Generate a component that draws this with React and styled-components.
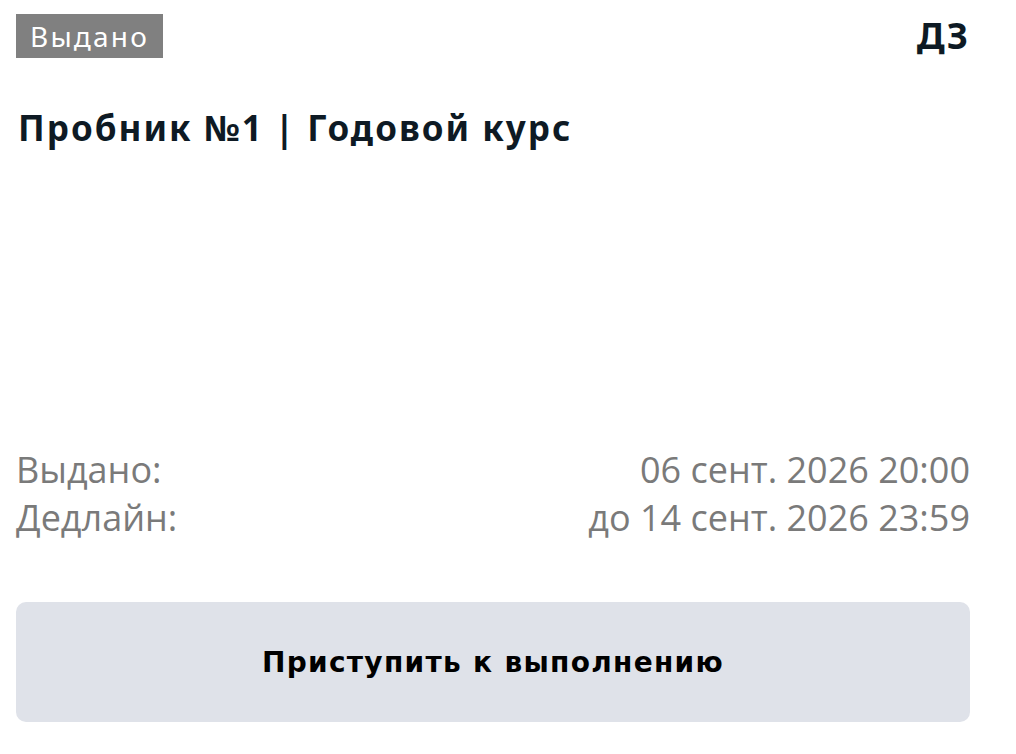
import React from 'react';
import styled, { createGlobalStyle } from 'styled-components';

const GlobalStyle = createGlobalStyle`
  html, body {
    margin: 0;
    padding: 0;
    background: #ffffff;
  }
  body {
    font-family: "Open Sans", "Noto Sans", sans-serif;
  }
`;

function App() {
  return (
    <>
      <GlobalStyle />
      <Card>
        <Header>
          <Badge>Выдано</Badge>
          <Kind>ДЗ</Kind>
        </Header>
        <Title>Пробник №1 | Годовой курс</Title>
        <Info>
          <InfoRow>
            <span>Выдано:</span>
            <span>06 сент. 2026 20:00</span>
          </InfoRow>
          <InfoRow>
            <span>Дедлайн:</span>
            <span>до 14 сент. 2026 23:59</span>
          </InfoRow>
        </Info>
        <StartButton>Приступить к выполнению</StartButton>
      </Card>
    </>
  );
}
export default App;

const Card = styled.div`
  box-sizing: border-box;
  width: 954px;
  height: 722px;
  margin-left: 16px;
  padding-top: 14px;
  display: flex;
  flex-direction: column;
`;

const Header = styled.div`
  display: flex;
  justify-content: space-between;
  align-items: flex-start;
`;

const Badge = styled.div`
  box-sizing: border-box;
  height: 44px;
  padding: 0 14px 0 14px;
  display: flex;
  align-items: center;
  background: #808080;
  color: #ffffff;
  font-family: "Noto Sans", "Open Sans", sans-serif;
  font-size: 28px;
  letter-spacing: 2.2px;
`;

const Kind = styled.div`
  font-family: "Noto Sans", sans-serif;
  font-weight: 700;
  font-size: 36px;
  line-height: 44px;
  letter-spacing: 2px;
  color: #0e1a24;
`;

const Title = styled.h1`
  margin: 46px 0 0 2px;
  font-family: "Noto Sans", sans-serif;
  font-weight: 700;
  font-size: 35px;
  line-height: 48px;
  letter-spacing: 2px;
  color: #0e1a24;
`;

const Info = styled.div`
  margin-top: auto;
  display: flex;
  flex-direction: column;
`;

const InfoRow = styled.div`
  display: flex;
  justify-content: space-between;
  font-family: "Open Sans", sans-serif;
  font-size: 36px;
  line-height: 48px;
  color: #7a7a7a;
`;

const StartButton = styled.button`
  margin-top: 60px;
  height: 120px;
  width: 100%;
  flex-shrink: 0;
  border: none;
  border-radius: 10px;
  background: #dfe2e9;
  color: #000000;
  font-family: "DejaVu Sans", "Liberation Sans", sans-serif;
  font-weight: 700;
  font-size: 28px;
  letter-spacing: 1.3px;
  cursor: pointer;
`;
